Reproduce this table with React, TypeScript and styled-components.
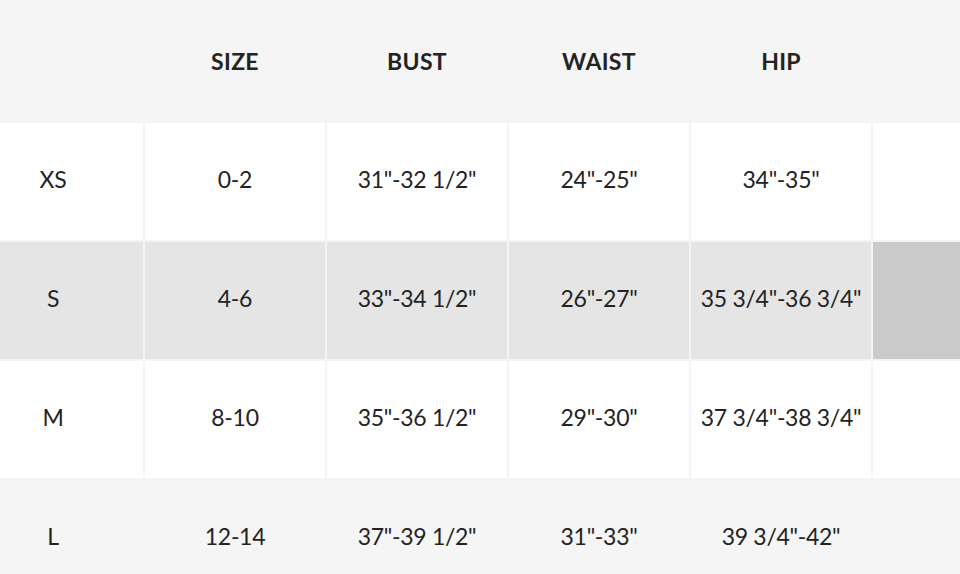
import React from "react";
import styled, { createGlobalStyle } from "styled-components";

const Global = createGlobalStyle`
  html, body { margin: 0; padding: 0; background: #f5f5f5; overflow: hidden; }
  body { width: 960px; height: 574px; }
`;

const Viewport = styled.div`
  width: 960px;
  height: 574px;
  overflow: hidden;
  background: #f5f5f5;
`;

const Grid = styled.div`
  display: grid;
  grid-template-columns: repeat(6, 180px);
  grid-template-rows: 121px repeat(4, 117px);
  gap: 2px;
  margin-left: -37px;
  width: max-content;
  background: #f4f4f4;
  font-family: "Lato", "Liberation Sans", sans-serif;
  color: #232323;
`;

type Tone = "head" | "white" | "selected" | "dark" | "light";

const toneBg: Record<Tone, string> = {
  head: "#f5f5f5",
  white: "#ffffff",
  selected: "#e5e5e5",
  dark: "#cbcbcb",
  light: "#f5f5f5",
};

const Cell = styled.div<{ $tone: Tone }>`
  display: flex;
  align-items: center;
  justify-content: center;
  padding-bottom: ${(p) => (p.$tone === "head" ? "0" : "5px")};
  background: ${(p) => toneBg[p.$tone]};
  font-size: 23px;
  font-weight: ${(p) => (p.$tone === "head" ? 700 : 400)};
  letter-spacing: ${(p) => (p.$tone === "head" ? "0.3px" : "-0.3px")};
  white-space: nowrap;
`;

const HeadRow = styled.div`
  display: contents;
`;

const header = ["", "SIZE", "BUST", "WAIST", "HIP", ""];
const rows: string[][] = [
  ["XS", "0-2", "31\"-32 1/2\"", "24\"-25\"", "34\"-35\""],
  ["S", "4-6", "33\"-34 1/2\"", "26\"-27\"", "35 3/4\"-36 3/4\""],
  ["M", "8-10", "35\"-36 1/2\"", "29\"-30\"", "37 3/4\"-38 3/4\""],
  ["L", "12-14", "37\"-39 1/2\"", "31\"-33\"", "39 3/4\"-42\""],
];

export default function App() {
  return (
    <Viewport>
      <Global />
      <Grid>
        <HeadRow>
          {header.map((h, i) => (
            <Cell key={i} $tone="head">{h}</Cell>
          ))}
        </HeadRow>
        {rows.map((r, ri) => {
          const tone: Tone = ri === 1 ? "selected" : ri === 3 ? "light" : "white";
          return (
            <React.Fragment key={ri}>
              {r.map((c, ci) => (
                <Cell key={ci} $tone={tone}>{c}</Cell>
              ))}
              <Cell $tone={ri === 1 ? "dark" : tone} />
            </React.Fragment>
          );
        })}
      </Grid>
    </Viewport>
  );
}
